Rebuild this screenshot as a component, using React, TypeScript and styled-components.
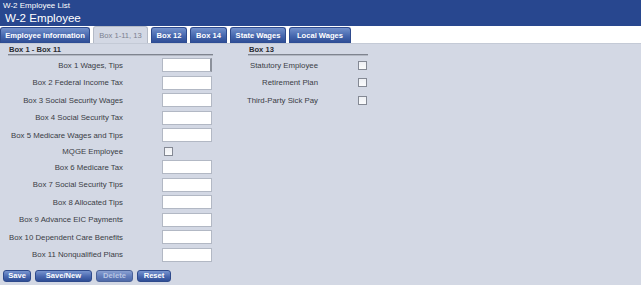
import React from "react";
import styled, { createGlobalStyle, css } from "styled-components";

const GlobalStyle = createGlobalStyle`
  html, body { margin: 0; padding: 0; height: 100%; }
  body {
    font-family: "Liberation Sans", Arial, sans-serif;
    background: #d3d8e4;
  }
  #root { min-height: 100%; }
`;

const Page = styled.div`
  display: flex;
  flex-direction: column;
  min-height: 100vh;
`;

const Header = styled.header`
  height: 26px;
  background: #28478f;
  color: #fff;
  padding-left: 3px;
  box-sizing: border-box;
  display: flex;
  flex-direction: column;
`;

const SubTitle = styled.div`
  font-size: 8px;
  line-height: 10px;
  padding-top: 1px;
`;

const Title = styled.div`
  font-size: 11.6px;
  line-height: 13px;
  padding-left: 2px;
`;

const TabBar = styled.nav`
  height: 18px;
  background: #fff;
  display: flex;
  align-items: flex-end;
  gap: 3px;
  box-sizing: border-box;
  border-bottom: 1px solid #c4cad6;
`;

const Tab = styled.div<{ $active?: boolean; $w: number }>`
  width: ${(p) => p.$w}px;
  height: 16px;
  box-sizing: border-box;
  display: flex;
  align-items: center;
  justify-content: center;
  border-radius: 3px 3px 0 0;
  font-size: 7.6px;
  white-space: nowrap;
  ${(p) =>
    p.$active
      ? css`
          background: #d3d8e4;
          color: #7b8190;
          border: 1px solid #b4bac6;
          border-bottom: none;
          height: 17px;
        `
      : css`
          background: linear-gradient(#7391cc, #4566ad 55%, #2c4b93);
          color: #fff;
          font-weight: bold;
          border: 1px solid #2f4b8e;
          border-bottom: none;
        `}
`;

const Content = styled.main`
  flex: 1;
  background: #d3d8e4;
  display: flex;
  flex-direction: column;
  padding-top: 1px;
`;

const Sections = styled.div`
  display: flex;
  align-items: flex-start;
`;

const Section = styled.section<{ $left: number; $w: number }>`
  margin-left: ${(p) => p.$left}px;
  width: ${(p) => p.$w}px;
  display: flex;
  flex-direction: column;
`;

const SectionHeading = styled.div<{ $indent?: number }>`
  margin-left: ${(p) => p.$indent ?? 0}px;
  font-size: 7.6px;
  font-weight: bold;
  color: #2a2d33;
  line-height: 9px;
  padding-left: 1px;
  border-bottom: 1px solid #7f848f;
  box-shadow: 0 1px 0 #b3b8c3;
  margin-bottom: 3px;
`;

const FieldGrid = styled.div<{ $cols: string }>`
  display: grid;
  grid-template-columns: ${(p) => p.$cols};
  row-gap: 3.5px;
  align-items: center;
`;

const Label = styled.label`
  font-size: 7.8px;
  color: #3a3d44;
  white-space: nowrap;
  text-align: right;
  display: flex;
  justify-content: flex-end;
`;

const TextInput = styled.input<{ $focused?: boolean }>`
  width: 50px;
  height: 14px;
  box-sizing: border-box;
  border: 1px solid #b2b8c4;
  ${(p) => p.$focused && css`border-right: 2px solid #8c919b;`}
  background: #fff;
  padding: 0;
  margin: 0;
  grid-column: 3;
  outline: none;
`;

const Check = styled.span`
  width: 9px;
  height: 9px;
  box-sizing: border-box;
  border: 1px solid #848994;
  background: linear-gradient(#eef0f4, #fafbfc);
  margin-left: 2px;
`;

const CheckRow = styled.div<{ $h: number }>`
  grid-column: 3;
  height: ${(p) => p.$h}px;
  display: flex;
  align-items: center;
`;

const ButtonRow = styled.div`
  display: flex;
  gap: 4px;
  padding-left: 3px;
  margin-top: 8px;
`;

const Button = styled.button<{ $w: number; $disabled?: boolean }>`
  width: ${(p) => p.$w}px;
  height: 12px;
  padding: 0;
  margin: 0;
  box-sizing: border-box;
  border-radius: 3px;
  font-family: "Liberation Sans", Arial, sans-serif;
  font-size: 7.6px;
  font-weight: bold;
  line-height: 10px;
  ${(p) =>
    p.$disabled
      ? css`
          background: linear-gradient(#8aa0d2, #617cbb 55%, #4f6aa8);
          border: 1px solid #4a6299;
          color: #b9c5e2;
        `
      : css`
          background: linear-gradient(#7895d0, #4968af 55%, #2f4e96);
          border: 1px solid #2e4a8c;
          color: #fff;
        `}
`;

const leftFields: { label: string; check?: boolean }[] = [
  { label: "Box 1 Wages, Tips" },
  { label: "Box 2 Federal Income Tax" },
  { label: "Box 3 Social Security Wages" },
  { label: "Box 4 Social Security Tax" },
  { label: "Box 5 Medicare Wages and Tips" },
  { label: "MQGE Employee", check: true },
  { label: "Box 6 Medicare Tax" },
  { label: "Box 7 Social Security Tips" },
  { label: "Box 8 Allocated Tips" },
  { label: "Box 9 Advance EIC Payments" },
  { label: "Box 10 Dependent Care Benefits" },
  { label: "Box 11 Nonqualified Plans" },
];

const rightFields = ["Statutory Employee", "Retirement Plan", "Third-Party Sick Pay"];

const tabs = [
  { label: "Employee Information", w: 90 },
  { label: "Box 1-11, 13", w: 55, active: true },
  { label: "Box 12", w: 36 },
  { label: "Box 14", w: 37 },
  { label: "State Wages", w: 56 },
  { label: "Local Wages", w: 62 },
];

export default function App() {
  return (
    <Page>
      <GlobalStyle />
      <Header>
        <SubTitle>W-2 Employee List</SubTitle>
        <Title>W-2 Employee</Title>
      </Header>
      <TabBar>
        {tabs.map((t) => (
          <Tab key={t.label} $w={t.w} $active={t.active}>
            {t.label}
          </Tab>
        ))}
      </TabBar>
      <Content>
        <Sections>
          <Section $left={8} $w={205}>
            <SectionHeading>Box 1 - Box 11</SectionHeading>
            <FieldGrid $cols="115px 39px 51px">
              {leftFields.map((f, i) => (
                <React.Fragment key={f.label}>
                  <Label>{f.label}</Label>
                  {f.check ? (
                    <CheckRow $h={11}>
                      <Check />
                    </CheckRow>
                  ) : (
                    <TextInput type="text" $focused={i === 0} />
                  )}
                </React.Fragment>
              ))}
            </FieldGrid>
          </Section>
          <Section $left={33} $w={122}>
            <SectionHeading $indent={2}>Box 13</SectionHeading>
            <FieldGrid $cols="72px 38px 12px">
              {rightFields.map((l) => (
                <React.Fragment key={l}>
                  <Label>{l}</Label>
                  <CheckRow $h={14}>
                    <Check />
                  </CheckRow>
                </React.Fragment>
              ))}
            </FieldGrid>
          </Section>
        </Sections>
        <ButtonRow>
          <Button $w={28}>Save</Button>
          <Button $w={57}>Save/New</Button>
          <Button $w={37} $disabled>
            Delete
          </Button>
          <Button $w={34}>Reset</Button>
        </ButtonRow>
      </Content>
    </Page>
  );
}
